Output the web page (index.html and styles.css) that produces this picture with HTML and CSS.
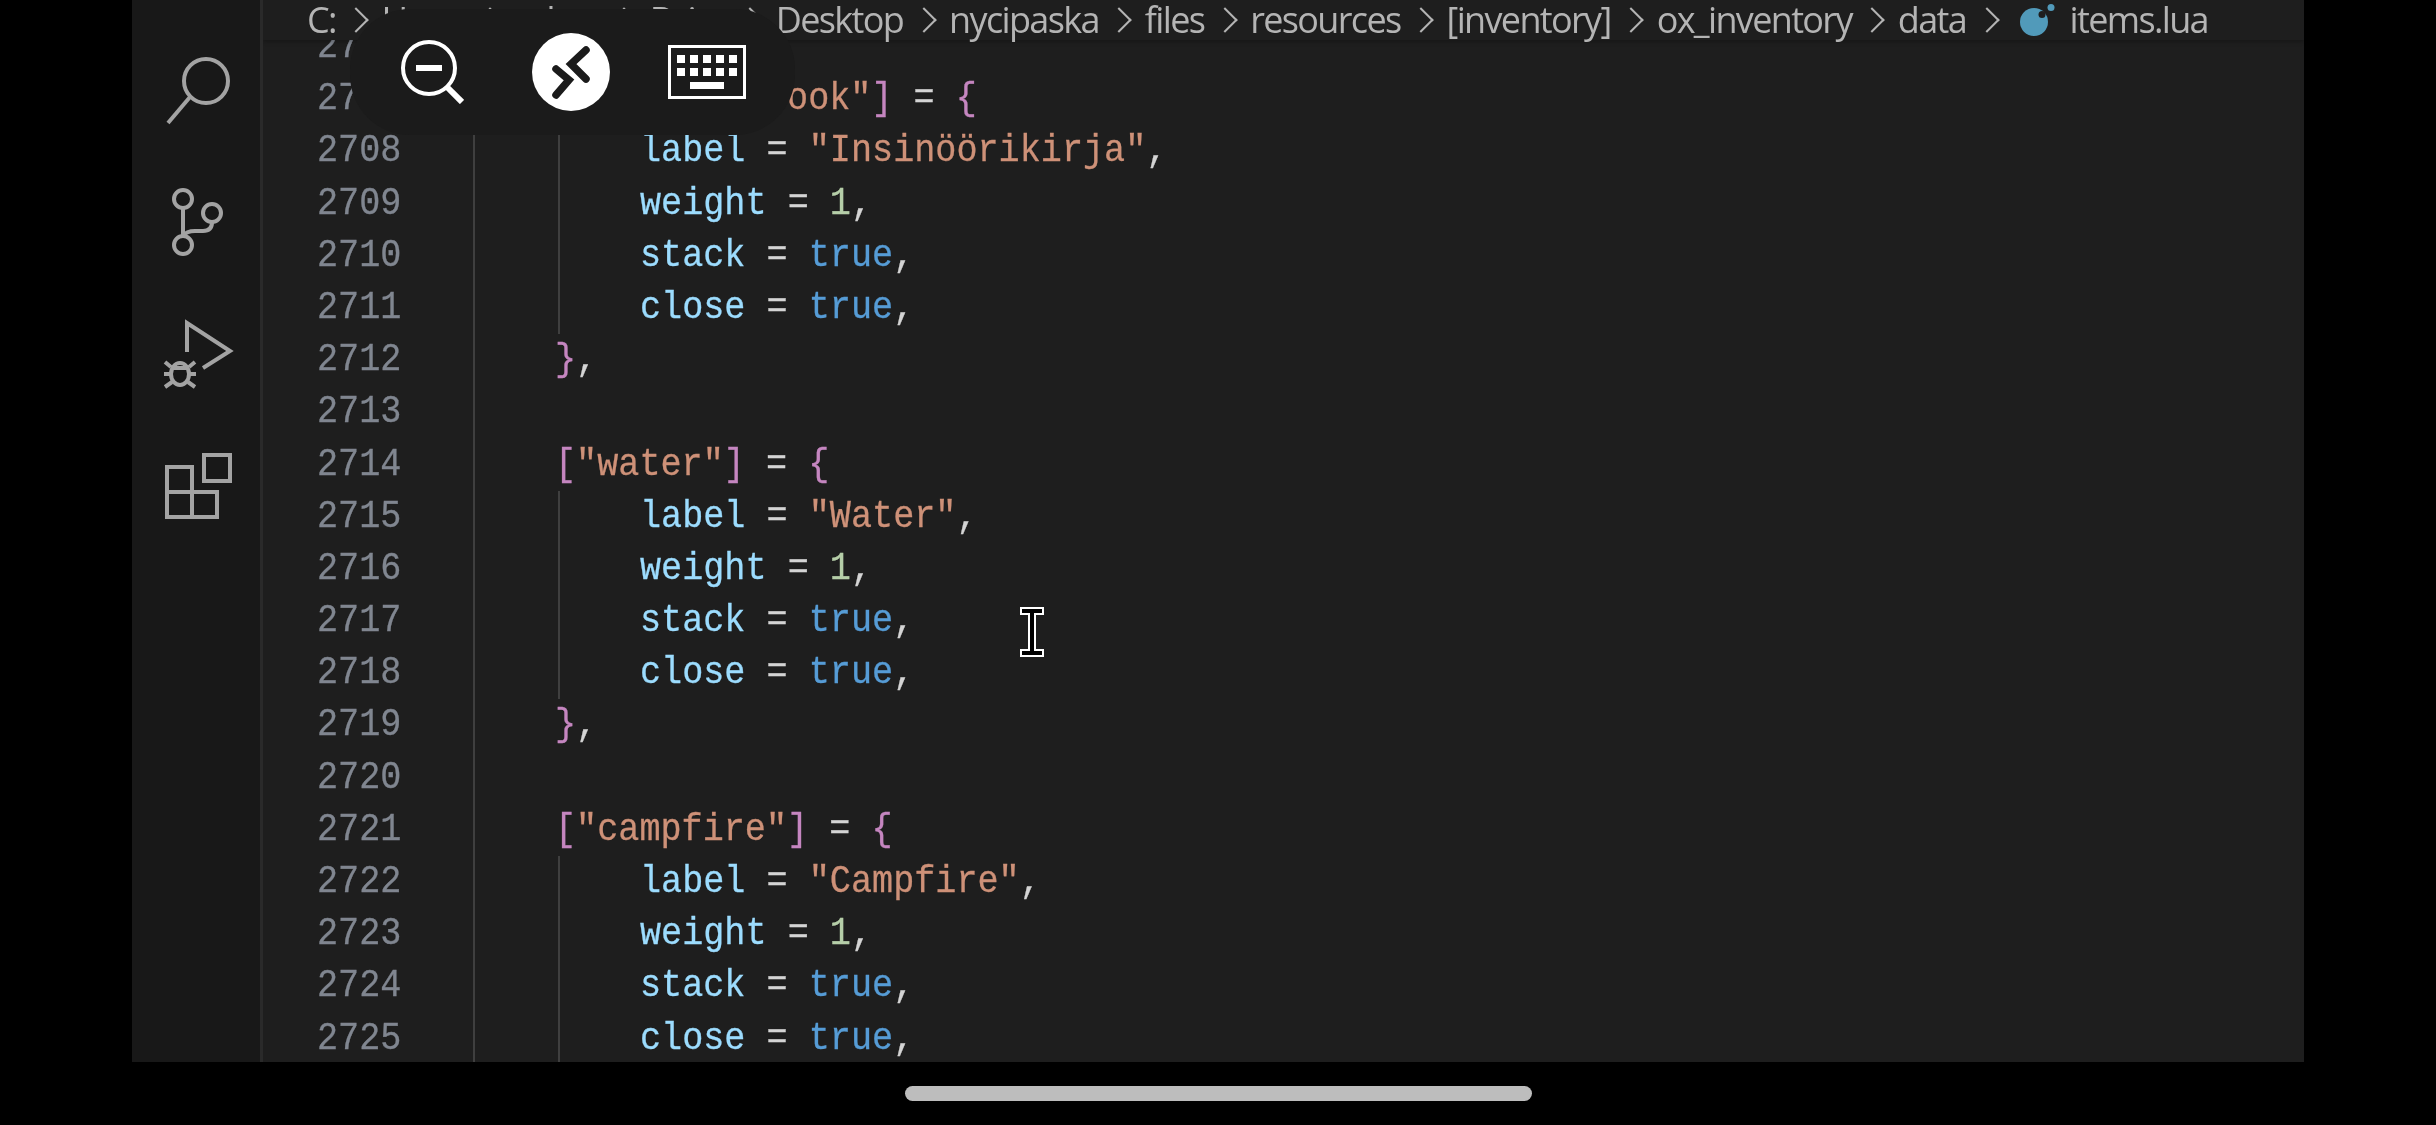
FILE: index.html
```
<!DOCTYPE html>
<html lang="en">
<head>
<meta charset="utf-8">
<title>items.lua</title>
<link rel="stylesheet" href="styles.css">
</head>
<body>
<div class="screen">
  <main class="window">
    <nav class="activity">
      <svg class="act act-search" viewBox="160 50 75 80"><circle cx="206" cy="81" r="22"/><path d="M190 97 168 123"/></svg>
      <svg class="act act-scm" viewBox="165 185 60 75"><circle cx="183" cy="199" r="9"/><circle cx="212" cy="213" r="9"/><circle cx="183" cy="245" r="9"/><path d="M183 208v28M212 222c0 6-3 9-9 9h-8c-6 0-10 2-12 5"/></svg>
      <svg class="act act-debug" viewBox="160 315 75 80"><path d="M187 352V323l43 28-27 17"/><ellipse cx="180" cy="374" rx="9" ry="11"/><path d="M165 362l6 5M195 362l-6 5M164 374h7M196 374h-7M165 387l7-5M195 387l-7-5M171 368h18"/></svg>
      <svg class="act act-ext" viewBox="160 450 75 75"><path d="M167 467h25v50h-25zM167 492h50v25h-25"/><rect x="204" y="455" width="26" height="26"/></svg>
    </nav>
    <section class="editor">
      <header class="crumbs">
        <span>C:</span><i></i><span>Users</span><i></i><span>adam</span><i></i><span>Drive</span><i></i><span>Desktop</span><i></i><span>nycipaska</span><i></i><span>files</span><i></i><span>resources</span><i></i><span>[inventory]</span><i></i><span>ox_inventory</span><i></i><span>data</span><i></i>
        <svg class="lua" viewBox="0 0 36 32"><circle cx="14" cy="18" r="14"/><circle cx="22" cy="10.500" r="3.500" class="lua-hole"/><circle cx="31" cy="3.500" r="3.500"/></svg>
        <span>items.lua</span>
      </header>
      <div class="code">
        <div class="ln"><span class="num">2706</span><span class="ind"></span><span class="ind"></span></div>
        <div class="ln"><span class="num">2707</span><span class="ind"></span><span class="txt"><b class="p">[</b><b class="s">"engineerbook"</b><b class="p">]</b> = <b class="p">{</b></span></div>
        <div class="ln"><span class="num">2708</span><span class="ind"></span><span class="ind"></span><span class="txt"><b class="k">label</b> = <b class="s">"Insinöörikirja"</b>,</span></div>
        <div class="ln"><span class="num">2709</span><span class="ind"></span><span class="ind"></span><span class="txt"><b class="k">weight</b> = <b class="n">1</b>,</span></div>
        <div class="ln"><span class="num">2710</span><span class="ind"></span><span class="ind"></span><span class="txt"><b class="k">stack</b> = <b class="t">true</b>,</span></div>
        <div class="ln"><span class="num">2711</span><span class="ind"></span><span class="ind"></span><span class="txt"><b class="k">close</b> = <b class="t">true</b>,</span></div>
        <div class="ln"><span class="num">2712</span><span class="ind"></span><span class="txt"><b class="p">}</b>,</span></div>
        <div class="ln"><span class="num">2713</span><span class="ind"></span></div>
        <div class="ln"><span class="num">2714</span><span class="ind"></span><span class="txt"><b class="p">[</b><b class="s">"water"</b><b class="p">]</b> = <b class="p">{</b></span></div>
        <div class="ln"><span class="num">2715</span><span class="ind"></span><span class="ind"></span><span class="txt"><b class="k">label</b> = <b class="s">"Water"</b>,</span></div>
        <div class="ln"><span class="num">2716</span><span class="ind"></span><span class="ind"></span><span class="txt"><b class="k">weight</b> = <b class="n">1</b>,</span></div>
        <div class="ln"><span class="num">2717</span><span class="ind"></span><span class="ind"></span><span class="txt"><b class="k">stack</b> = <b class="t">true</b>,</span></div>
        <div class="ln"><span class="num">2718</span><span class="ind"></span><span class="ind"></span><span class="txt"><b class="k">close</b> = <b class="t">true</b>,</span></div>
        <div class="ln"><span class="num">2719</span><span class="ind"></span><span class="txt"><b class="p">}</b>,</span></div>
        <div class="ln"><span class="num">2720</span><span class="ind"></span></div>
        <div class="ln"><span class="num">2721</span><span class="ind"></span><span class="txt"><b class="p">[</b><b class="s">"campfire"</b><b class="p">]</b> = <b class="p">{</b></span></div>
        <div class="ln"><span class="num">2722</span><span class="ind"></span><span class="ind"></span><span class="txt"><b class="k">label</b> = <b class="s">"Campfire"</b>,</span></div>
        <div class="ln"><span class="num">2723</span><span class="ind"></span><span class="ind"></span><span class="txt"><b class="k">weight</b> = <b class="n">1</b>,</span></div>
        <div class="ln"><span class="num">2724</span><span class="ind"></span><span class="ind"></span><span class="txt"><b class="k">stack</b> = <b class="t">true</b>,</span></div>
        <div class="ln"><span class="num">2725</span><span class="ind"></span><span class="ind"></span><span class="txt"><b class="k">close</b> = <b class="t">true</b>,</span></div>
      </div>
      <svg class="ibeam" viewBox="0 0 24 50"><path d="M1 1h22v6h-8v36h8v6H1v-6h8V7H1z"/></svg>
    </section>
    <aside class="pill">
      <svg class="pill-zoom" viewBox="0 0 64 64"><circle cx="29" cy="28" r="26"/><path d="M16 28h26" class="thick"/><path d="M47 47l15 15" class="thick"/></svg>
      <svg class="pill-rd" viewBox="0 0 78 78"><circle cx="39" cy="39" r="39" class="disc"/><path d="M54 17 39 31 54 46M24 36 37 47 24 62" class="slash"/></svg>
      <svg class="pill-kb" viewBox="0 0 78 54"><rect x="1.500" y="1.500" width="75" height="51" class="frame"/><path d="M9 10h8v8H9zM22 10h8v8h-8zM35 10h8v8h-8zM48 10h8v8h-8zM61 10h8v8h-8zM9 23h8v8H9zM22 23h8v8h-8zM35 23h8v8h-8zM48 23h8v8h-8zM61 23h8v8h-8zM22 37h34v7H22z" class="keys"/></svg>
    </aside>
  </main>
  <footer class="home"><span class="bar"></span></footer>
</div>
</body>
</html>
```
FILE: styles.css
```
html, body { margin: 0; height: 100%; background: #000; overflow: hidden; }
.screen { width: 2436px; height: 1125px; display: flex; flex-direction: column; background: #000; }
.window { position: relative; height: 1062px; margin: 0 132px; display: flex; overflow: hidden; background: #1e1e1e; }

.activity { width: 128px; flex: none; background: #181818; border-right: 3px solid #2a2a2a; display: flex; flex-direction: column; filter: blur(.6px); }
.act { display: block; fill: none; stroke: #a3a3a3; stroke-width: 4; }
.act-search { width: 75px; height: 80px; margin: 50px 0 0 28px; }
.act-scm { width: 60px; height: 75px; margin: 55px 0 0 33px; }
.act-debug { width: 75px; height: 80px; margin: 55px 0 0 28px; }
.act-ext { width: 75px; height: 75px; margin: 55px 0 0 28px; }

.editor { position: relative; flex: 1; min-width: 0; overflow: hidden; }
.crumbs { position: relative; z-index: 2; height: 40px; padding-left: 44px; display: flex; align-items: center; gap: 17.5px; background: #1e1e1e; color: #b4b4b4; font: 36px/40px "Open Sans", sans-serif; letter-spacing: -1.65px; white-space: nowrap; filter: blur(.6px); box-shadow: 0 2px 4px rgba(0,0,0,.25); }
.crumbs i { width: 18px; height: 18px; flex: none; margin: 0 -1px 0 -6px; border-top: 2.5px solid #b4b4b4; border-right: 2.5px solid #b4b4b4; box-sizing: border-box; transform: rotate(45deg); }
.lua { width: 36px; height: 32px; fill: #519aba; flex: none; margin: 0 -4px 0 8px; }
.lua-hole { fill: #1e1e1e; }

.code { margin-top: -19px; font: 38px/52.2px "Liberation Mono", monospace; color: #d4d4d4; filter: blur(.7px); -webkit-text-stroke: .3px; }
.ln { height: 52.2px; display: flex; }
.num { width: 156px; flex: none; padding-left: 54px; color: #808690; transform: scaleX(.925); transform-origin: 54px 0; }
.ind { width: 83px; flex: none; border-left: 2px solid #3f3f3f; }
.txt { margin-left: -3px; white-space: pre; transform: scaleX(.925); transform-origin: 0 0; }
.txt b { font-weight: 400; }
.k { color: #9cdcfe; }
.s { color: #ce9178; }
.t { color: #569cd6; }
.n { color: #b5cea8; }
.p { color: #c586c0; }

.ibeam { position: absolute; left: 757px; top: 607px; width: 24px; height: 50px; fill: #000; stroke: #fff; stroke-width: 2; z-index: 3; }

.pill { position: absolute; z-index: 4; left: 218px; top: 9px; width: 445px; height: 126px; border-radius: 60px; background: #1b1b1b; }
.pill svg { position: absolute; }
.pill-zoom { left: 50px; top: 31px; width: 64px; height: 64px; fill: none; stroke: #fff; stroke-width: 4; }
.thick { stroke-width: 6; }
.pill-rd { left: 182px; top: 24px; width: 78px; height: 78px; }
.disc { fill: #fff; }
.slash { fill: none; stroke: #1b1b1b; stroke-width: 7.500; stroke-linejoin: miter; stroke-linecap: round; }
.pill-kb { left: 318px; top: 36px; width: 78px; height: 54px; }
.frame { fill: none; stroke: #fff; stroke-width: 3; }
.keys { fill: #fff; }

.home { height: 63px; display: flex; justify-content: center; align-items: flex-start; }
.bar { width: 627px; height: 15px; margin-top: 24px; border-radius: 8px; background: #bdbdbd; }
```
